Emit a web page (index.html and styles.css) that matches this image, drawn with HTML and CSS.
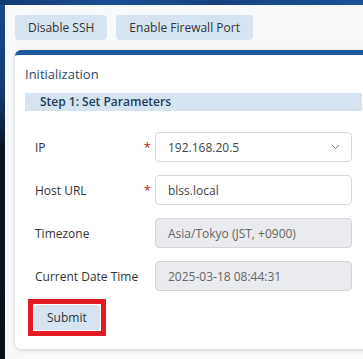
FILE: index.html
```html
<!DOCTYPE html>
<html>
<head>
<meta charset="utf-8">
<link rel="stylesheet" href="styles.css">
</head>
<body>
<div class="topbar"></div>
<div class="shell">
  <div class="side"></div>
  <main class="main">
    <div class="actions">
      <button class="btn">Disable SSH</button>
      <button class="btn">Enable Firewall Port</button>
    </div>
    <section class="card">
      <div class="card-title">Initialization</div>
      <div class="step">Step 1: Set Parameters</div>
      <div class="form">
        <div class="row">
          <label class="lbl">IP<span class="req">*</span></label>
          <div class="field select">
            <span>192.168.20.5</span>
            <svg class="chev" width="9" height="6" viewBox="0 0 9 6"><path d="M1 1 L4.5 4.5 L8 1" fill="none" stroke="#8a8a8a" stroke-width="1"/></svg>
          </div>
        </div>
        <div class="row">
          <label class="lbl">Host URL<span class="req">*</span></label>
          <div class="field">blss.local</div>
        </div>
        <div class="row">
          <label class="lbl">Timezone</label>
          <div class="field disabled">Asia/Tokyo (JST, +0900)</div>
        </div>
        <div class="row">
          <label class="lbl">Current Date Time</label>
          <div class="field disabled">2025-03-18 08:44:31</div>
        </div>
      </div>
      <div class="submit-wrap">
        <span class="highlight"><button class="btn submit">Submit</button></span>
      </div>
    </section>
  </main>
</div>
</body>
</html>
```

FILE: styles.css
```css
* { box-sizing: border-box; }
html, body {
  margin: 0;
  padding: 0;
  width: 363px;
  height: 359px;
  overflow: hidden;
  background: #0b141f;
  font-family: "Open Sans", "Liberation Sans", sans-serif;
  font-size: 12px;
  color: #333;
}
.topbar {
  height: 5px;
  background: linear-gradient(90deg, #123a74 0%, #1b4f94 30%, #15427f 60%, #1d5398 100%);
}
.shell {
  display: flex;
  height: 354px;
}
.side {
  width: 5px;
  flex: none;
  background: linear-gradient(180deg, #1a4a8a 0%, #143a6e 25%, #0b1622 40%, #0a121b 100%);
}
.main {
  flex: 1;
  min-width: 0;
  background: #f8f9fb;
  padding: 10px 0 0 10px;
}
.actions {
  display: flex;
  gap: 9px;
}
.btn {
  font-family: inherit;
  font-size: 12px;
  color: #333;
  background: #d6e4f1;
  border: none;
  border-radius: 4px;
  height: 25px;
  padding: 0 13px;
}
.card {
  margin-top: 10px;
  margin-right: -9px;
  background: #fff;
  border-top: 5px solid #1c5b9e;
  border-radius: 6px;
  box-shadow: 0 1px 4px rgba(0,0,0,0.18);
  padding: 9px 10px 13px 10px;
}
.card-title {
  color: #2b4a68;
  font-size: 13px;
  line-height: 20px;
  height: 20px;
}
.step {
  margin-top: 9px;
  background: #d6e4f1;
  color: #1f3d5e;
  font-weight: 600;
  line-height: 18px;
  padding-left: 15px;
}
.form {
  padding: 21px 10px 0 10px;
  display: flex;
  flex-direction: column;
  gap: 13px;
}
.row {
  display: flex;
  align-items: center;
}
.lbl {
  width: 120px;
  flex: none;
  display: flex;
  justify-content: space-between;
  align-items: center;
  padding-right: 4px;
  color: #333;
}
.req {
  color: #b3262c;
  font-size: 13px;
}
.field {
  flex: 1;
  height: 30px;
  border: 1px solid #d6d6d6;
  border-radius: 4px;
  padding: 0 12px;
  display: flex;
  align-items: center;
  color: #444;
  background: #fff;
}
.field.select {
  justify-content: space-between;
}
.chev { margin-right: -1px; }
.field.disabled {
  background: #e9ebee;
  color: #666;
}
.submit-wrap {
  padding: 8px 0 0 3px;
}
.highlight {
  display: inline-flex;
  border: 5px solid #e31b23;
  padding: 1px;
}
.submit {
  height: 25px;
  padding: 0 13px;
}
```
